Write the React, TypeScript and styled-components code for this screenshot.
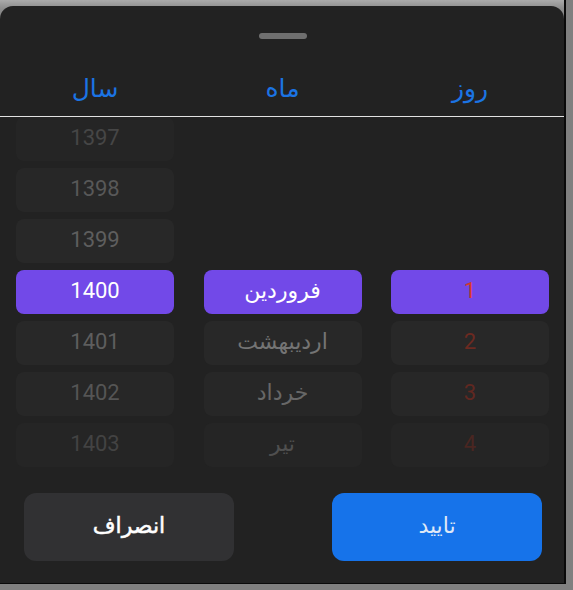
import React from "react";
import styled, { createGlobalStyle } from "styled-components";

const Global = createGlobalStyle`
  html, body { margin: 0; padding: 0; background: #808080; }
  body { font-family: Roboto, "DejaVu Sans", sans-serif; }
`;

const Frame = styled.div`
  width: 564px;
  height: 583px;
  border-right: 2px solid #0a0a0a;
  border-bottom: 1px solid #0a0a0a;
  background: linear-gradient(to bottom, #ababab 0px, #8e8e8e 8px, #808080 20px);
  display: flex;
  flex-direction: column;
`;

const Sheet = styled.div`
  margin-top: 6px;
  flex: 1;
  background: #222222;
  border-radius: 13px 13px 0 0;
  display: flex;
  flex-direction: column;
  padding-top: 27px;
  padding-bottom: 22px;
  box-sizing: border-box;
`;

const Handle = styled.div`
  align-self: center;
  width: 48px;
  height: 6px;
  border-radius: 3px;
  background: #6f6f6f;
  margin-left: 2px;
`;

const Header = styled.div`
  display: grid;
  grid-template-columns: repeat(3, 158px);
  column-gap: 29.5px;
  padding: 0 15px 0 16px;
  align-items: center;
  border-bottom: 1px solid #e2e2e2;
  box-sizing: border-box;
  height: 78px;
`;

const HeaderLabel = styled.div`
  text-align: center;
  color: #1b74e4;
  font-size: 25px;
  padding-top: 22px;
`;

const Columns = styled.div`
  height: 357px;
  overflow: hidden;
  display: grid;
  grid-template-columns: repeat(3, 158px);
  column-gap: 29.5px;
  padding: 0 15px 0 16px;
`;

const Column = styled.div`
  display: flex;
  flex-direction: column;
  gap: 7px;
`;

const Row = styled.div<{ $selected?: boolean; $empty?: boolean; $fade: number }>`
  height: 44px;
  box-sizing: border-box;
  padding-bottom: 4px;
  border-radius: 8px;
  display: flex;
  align-items: center;
  justify-content: center;
  font-size: 22px;
  background: ${(p) => (p.$selected ? "#7249e8" : "#282828")};
  visibility: ${(p) => (p.$empty ? "hidden" : "visible")};
  opacity: ${(p) => p.$fade};
`;

const YearText = styled.span<{ $selected?: boolean }>`
  color: ${(p) => (p.$selected ? "#ffffff" : "#5e5e5e")};
`;

const MonthText = styled.span<{ $selected?: boolean }>`
  color: ${(p) => (p.$selected ? "#ffffff" : "#747474")};
  font-size: 22px;
`;

const DayText = styled.span<{ $selected?: boolean }>`
  color: ${(p) => (p.$selected ? "#d23a2c" : "#6c2a21")};
`;

const Actions = styled.div`
  margin-top: 19px;
  display: flex;
  justify-content: space-between;
  padding: 0 22px 0 24px;
`;

const Button = styled.button<{ $primary?: boolean }>`
  width: 210px;
  height: 68px;
  border: none;
  border-radius: 12px;
  font-family: Roboto, "DejaVu Sans", sans-serif;
  font-size: 22px;
  padding-bottom: 4px;
  background: ${(p) => (p.$primary ? "#1673ea" : "#313133")};
  color: ${(p) => (p.$primary ? "#dfe8f6" : "#ffffff")};
  -webkit-text-stroke: ${(p) => (p.$primary ? "0" : "0.5px #ffffff")};
  cursor: pointer;
`;

const fades = [0.6, 0.9, 1, 1, 1, 0.85, 0.55];
const SELECTED = 3;

const years = ["1397", "1398", "1399", "1400", "1401", "1402", "1403"];
const months: (string | null)[] = [null, null, null, "فروردین", "اردیبهشت", "خرداد", "تیر"];
const days: (string | null)[] = [null, null, null, "1", "2", "3", "4"];

export default function App() {
  return (
    <>
      <Global />
      <Frame>
        <Sheet dir="rtl">
          <Handle />
          <Header>
            <HeaderLabel>روز</HeaderLabel>
            <HeaderLabel>ماه</HeaderLabel>
            <HeaderLabel>سال</HeaderLabel>
          </Header>
          <Columns>
            <Column>
              {days.map((d, i) => (
                <Row key={i} $empty={!d} $selected={i === SELECTED} $fade={fades[i]}>
                  <DayText $selected={i === SELECTED}>{d}</DayText>
                </Row>
              ))}
            </Column>
            <Column>
              {months.map((m, i) => (
                <Row key={i} $empty={!m} $selected={i === SELECTED} $fade={fades[i]}>
                  <MonthText $selected={i === SELECTED}>{m}</MonthText>
                </Row>
              ))}
            </Column>
            <Column>
              {years.map((y, i) => (
                <Row key={i} $selected={i === SELECTED} $fade={fades[i]}>
                  <YearText $selected={i === SELECTED}>{y}</YearText>
                </Row>
              ))}
            </Column>
          </Columns>
          <Actions>
            <Button $primary>تایید</Button>
            <Button>انصراف</Button>
          </Actions>
        </Sheet>
      </Frame>
    </>
  );
}
